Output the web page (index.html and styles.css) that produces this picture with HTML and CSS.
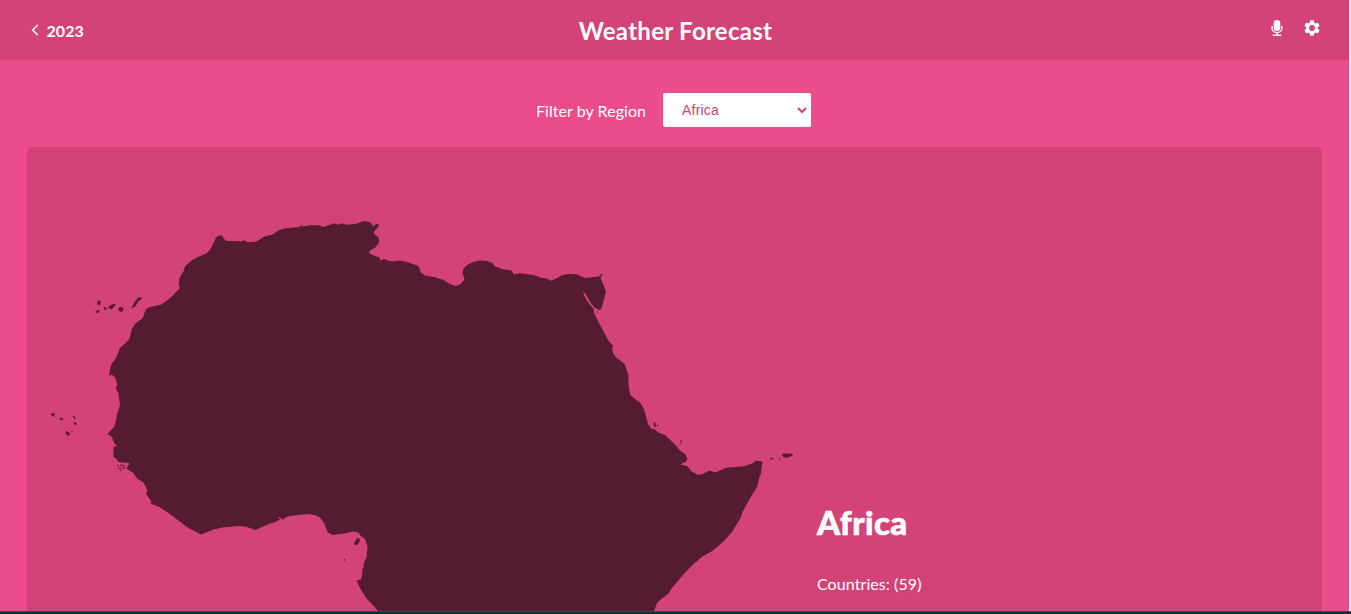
FILE: index.html
```html
<!DOCTYPE html>
<html lang="en">
<head>
<meta charset="utf-8">
<title>Weather Forecast</title>
<link rel="stylesheet" href="styles.css">
</head>
<body>
<div class="app">
  <header class="header">
    <a class="back">
      <svg class="back-icon" viewBox="0 0 8 12"><path d="M6.700 1 1.700 6l5 5"/></svg>
      <span>2023</span>
    </a>
    <h1 class="title">Weather Forecast</h1>
    <div class="actions">
      <svg class="mic" viewBox="0 0 12 16">
        <rect x="2.700" y="0" width="6.600" height="11" rx="3.300"/>
        <path class="line" d="M1.100 6v2.200a4.900 4.400 0 0 0 9.800 0V6M6 12.500v2.500M1.800 15.200h8.400"/>
      </svg>
      <svg class="gear" viewBox="2 2 20 20"><path d="M19.140 12.940c.04-.3.060-.61.060-.94 0-.32-.02-.64-.07-.94l2.030-1.580c.18-.14.230-.41.120-.61l-1.920-3.320c-.12-.22-.37-.29-.59-.22l-2.390.96c-.5-.38-1.030-.7-1.620-.94l-.36-2.540c-.04-.24-.24-.41-.48-.41h-3.840c-.24 0-.43.170-.47.410l-.36 2.540c-.59.240-1.130.570-1.620.940l-2.390-.96c-.22-.08-.47 0-.59.220L2.740 8.870c-.12.210-.08.470.120.610l2.030 1.580c-.05.300-.09.630-.09.940s.02.640.07.940l-2.030 1.580c-.18.140-.23.410-.12.610l1.920 3.320c.12.220.370.290.590.220l2.390-.96c.5.380 1.030.700 1.620.940l.36 2.540c.05.240.240.410.480.410h3.840c.24 0 .44-.17.470-.41l.36-2.540c.59-.24 1.130-.56 1.620-.94l2.390.96c.22.080.470 0 .59-.22l1.920-3.320c.12-.22.070-.47-.12-.61l-2.010-1.580zM12 15.600a3.600 3.600 0 1 1 0-7.200 3.600 3.600 0 0 1 0 7.200z"/></svg>
    </div>
  </header>
  <main class="main">
    <div class="filter">
      <label for="region">Filter by Region</label>
      <select id="region" class="select"><option>Africa</option><option>Antarctic</option><option>Asia</option><option>Europe</option></select>
    </div>
    <section class="panel">
      <svg class="map" viewBox="27 147 790 464">
        <!-- Mainland -->
        <path d="M109.300 376L110 369 112 363.300 116 358 120 348 124 344.500 129.300 339.300 130.700 333.300 132 328.500 135 324 138 321.500 142.700 318.300 144.500 313 146 309 150 307 161 304.700 170 298.300 180 288 178.700 285 179.300 278.300 183.300 271.700 185.300 266 191.700 260.300 198 257 206.700 253.300 209.500 250.500 212 246 216 237.500 218 236 222 235.300 223.500 238.500 226.700 240.900 241.700 241.300 244.300 240.300 247.500 242.300 256 241.700 259 240 263.300 237 269 235.200 271.500 235 276.700 231.700 280 229.700 285 228.500 299.300 227 301 225.300 303 226.400 310 225.300 318.300 225.300 323.300 227 328.300 225.300 334.300 223.300 338.300 224.700 342.300 223.300 346.700 224.700 356.700 223.700 361 222 365 221 371 222.700 373 226.300 377 223.700 378.900 223.700 378 227.300 373.700 231.700 375 234.700 378 236.700 379.300 240 379 242.700 375 247.700 369.300 251 369.500 253.500 372 254.500 377 256.800 379 256.800 380.500 260.500 384 259 387 260.200 392 261.500 399.700 260.600 406 261.800 418 265.800 419.800 268.500 420.500 272 425 275.500 435 277.200 443 279.800 450 284 455.500 286 460 284.500 464.500 279.800 463.800 277 462.600 272.500 463.500 268.500 467 265.300 473 262 480 260.500 487 261 492.500 263 495 266.500 503 269.300 510.500 270 512.500 271.500 513.500 274.300 520 273.200 533.500 275 540 277.500 547 278.700 551 280.800 556 278.500 562 275.300 568 274 577 274.300 581 276.200 585 278 592 277.300 599 276.500 602 273.300 602.300 275 600.500 277.500 602 281 606 292 604 299 601.300 309 599 310 594.500 307.500 590 302 587 296.500 583 290.500 584 295 587 301 593.500 308.500 594 313 600.500 326 609 341.500 614 346.500 612 347 613 353 616 357.500 624.500 364 628.300 374.500 628.500 384 630 394.500 634 398 640 402.500 643.500 408 646 416 648 424 652 429.500 654 428.500 658 432.500 665 435 668 438 675.500 445 680 450.500 685.500 454.500 687.300 459 686 461.500 680 464.500 687 466 692 471.500 698 475 703 473.700 709 470.800 716 472.300 721 470 726 467.700 744 466.300 751.500 463.700 756 460.800 762.500 461.500 761 473 758.500 480 757.500 486 749 500 742.500 512 740.500 518 732 532 724 541 713 550.500 702 556.800 693 564.500 682 576 672 588 668 594 659.500 600.500 657 603 654 611H378L372 604 366 598 364 594.500 361 590 356.500 580.500 361 579.500 362 575 362.500 569 364 567 363.500 564 366.500 557.500 367.500 546.500 365.500 540 364.500 538.500 361 536 358 532.500 353.500 531.500 344 533.500 332.500 535 328 532.500 325.500 527 324.500 523.500 319.500 517 314.500 515 307.500 514 290 516 286.500 517 283 519.500 277.500 516.500 280 519.500 274.500 522.500 270 523.500 263.500 526.500 255 530 246.500 526.800 238 526 222 527.500 213 529.800 201 534.500 187 527 172 515.500 159.500 507 150.500 503.500 151.500 501.500 147.500 496 146 494.500 147.500 490.500 143.500 482.500 137 478.500 133 472.500 131.500 472 126.500 468.500 129.500 463 122 462.500 118.500 462 116 458.500 113.500 457 113.500 447 117 446 114 443 112 437 107.500 434 114 427 116 421 117 414 120 405 118.500 393.500 116 389 117 384 115.500 378.500 112 374.500z"/>
        <!-- Canary Islands -->
        <path d="M97 302l2-1.500 2 1-.5 2.500-1 1.500-2-1zM95.300 312l2-2 2.500.5-1 2-3 .5zM104 307l2 .5 1 1.500-1.500 1-1.700-1zM108 307l4-2.500 4-1-1 2-3.500 4-3-1.500zM119.500 307l2.500 0 1.700 2.300-1.700 2.700-2.500-.5-1.200-2.200zM131 308.500l5-8.500 3-3 3 .5-1 2-3 2-2.500 5zM137 300l3-2.500 1.500 0-2.500 3z"/>
        <!-- Cape Verde -->
        <path d="M50.500 413.700l3.500-.7 1 2-3 1.500zM54 416l2.300.5-.5.700zM59.700 417.800l3.600.5-.5 1.700-2.800-.5zM72.700 415.700l1.500 0 1.300 2.800-1.200 1zM73.200 422.800l2.300-.5 1.500 1.200-1.700 2zM65.500 432l1.500-1 3.300 3-1.800 1.800-1.700-.5zM71 431.300l1.600 0 0 1.600z"/>
        <!-- Bissagos -->
        <path d="M117 465h2v1h-2zM120.500 464.500h2v1.500h-2zM123.500 465h1v2h-1zM118 467.500h3v1h-3zM122 467.500h3v1h-3zM120 469.500h2v1h-2z"/>
        <!-- Gulf of Guinea -->
        <path d="M354 543l3-4.700 2.700 0-.2 3.200-2 3.500-3-.5zM344 559h1v1.800h-1z"/>
        <!-- Red Sea and Socotra -->
        <path d="M654 422l1 0 .5 2.500 1 1-1 1.500-2-1zM657 425h1v1.500h-1zM680.300 440.500h1.400v2h-1.400zM679.500 444h1v1h-1zM596.500 311.500h1.500v1h-1.500zM770 458h3v1.200h-3zM779 458h1.200v1.200h-1.200zM782 455l1.500-1.500 6 0 4 1-2 1.700-4 1.500-4-.5z"/>
      </svg>
      <div class="info">
        <h2 class="region">Africa</h2>
        <p class="count">Countries: (59)</p>
      </div>
    </section>
  </main>
  <div class="taskbar"></div>
</div>
</body>
</html>
```
FILE: styles.css
```css
* { box-sizing: border-box; }

body {
  margin: 0;
  height: 614px;
  overflow: hidden;
  background: #f1f1f1;
  color: #fff;
  font: 16px/1.5 Lato, sans-serif;
}

.app {
  display: flex;
  flex-direction: column;
  height: 614px;
}

.header {
  display: grid;
  grid-template-columns: 1fr auto 1fr;
  align-items: center;
  width: 1349px;
  height: 60px;
  padding: 2px 29px 0 31px;
  background: #d34378;
}

.back {
  display: flex;
  align-items: center;
  gap: 7.5px;
  font-weight: 700;
  letter-spacing: 0.05px;
}

.back-icon {
  width: 8px;
  height: 12px;
  margin-top: -3px;
  fill: none;
  stroke: #fff;
  stroke-width: 1.5;
}

.title {
  margin: 0;
  font-size: 24px;
  line-height: 36px;
  font-weight: 700;
  letter-spacing: 0.28px;
}

.actions {
  display: flex;
  justify-content: flex-end;
  align-items: center;
  gap: 21px;
  padding-bottom: 7px;
  fill: #fff;
}

.mic { width: 12px; height: 16px; }
.mic .line { fill: none; stroke: #fff; stroke-width: 1.4; }
.gear { width: 16px; height: 16px; }

.main {
  display: flex;
  flex-direction: column;
  flex: 1;
  min-height: 0;
  width: 1349px;
  padding: 33px 27px 0;
  background: #ec4c8a;
}

.filter {
  display: flex;
  justify-content: center;
  align-items: center;
  gap: 17px;
  height: 34px;
  margin-bottom: 20px;
}

.filter label {
  padding-top: 2px;
  letter-spacing: 0.06px;
}

.select {
  width: 148px;
  height: 34px;
  margin-right: 2px;
  padding: 0 1px 0 14px;
  border: 0;
  border-right: 1px solid #fff;
  border-left: 1px solid #fff;
  border-radius: 2px;
  background: #fff;
  color: #d34378;
  font: 14px "Liberation Sans", sans-serif;
  letter-spacing: 0.2px;
}

.panel {
  display: flex;
  flex: 1;
  min-height: 0;
  overflow: hidden;
  border-radius: 5px 5px 0 0;
  background: #d34378;
}

.map {
  flex: none;
  width: 790px;
  height: 464px;
  fill: #551b30;
}

.info { padding-top: 351px; }

.region {
  margin: 0;
  font-size: 33px;
  line-height: 48px;
  font-weight: 900;
  letter-spacing: 0.4px;
  -webkit-text-stroke: 0.6px #fff;
}

.count {
  margin: 26px 0 0;
  letter-spacing: 0.08px;
}

.taskbar {
  flex: none;
  height: 3px;
  background: #172a33;
  border-top: 1px solid #3c4a55;
}
```
